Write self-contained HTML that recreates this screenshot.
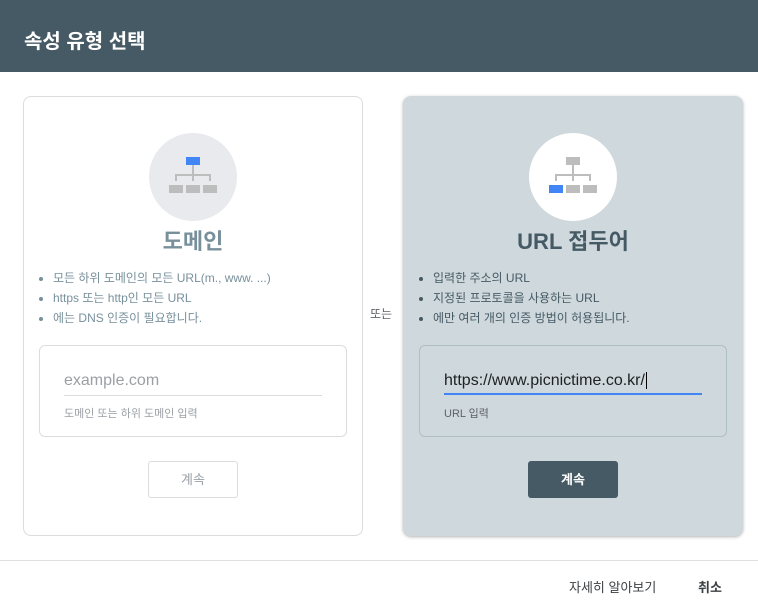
<!DOCTYPE html>
<html><head><meta charset="utf-8"><style>
*{margin:0;padding:0;box-sizing:border-box}
body{width:758px;height:611px;background:#fff;font-family:"Liberation Sans","Noto Sans CJK KR",sans-serif;position:relative;overflow:hidden}
.a{position:absolute}
.hdr{left:0;top:0;width:758px;height:72px;background:#455a64;color:#fff;font-size:20px;font-weight:bold;padding:25px 0 0 24px}
.card{top:96px;width:340px;height:440px;border-radius:8px}
.circ{width:88px;height:88px;border-radius:50%}
.t{font-size:22px;font-weight:bold;text-align:center;width:340px}
ul{list-style:none;font-size:12px}
li{position:relative;height:20px;line-height:20px}
li:before{content:"";position:absolute;left:-14px;top:9px;width:4px;height:4px;border-radius:50%;background:currentColor}
.box{width:308px;height:92px;border-radius:6px}
</style></head><body>
<div class="a hdr">속성 유형 선택</div>

<div class="a card" style="left:23px;border:1px solid #dadce0"></div>
<div class="a circ" style="left:149px;top:133px;background:#e8eaed"></div>
<svg class="a" style="left:169px;top:157px" width="48" height="40"><rect x="17" y="0" width="14" height="8" fill="#4285f4"/><path d="M24 8v10M7 24v-6h34v6M24 18v6" stroke="#bdbdbd" stroke-width="2" fill="none"/><rect x="0" y="28" width="14" height="8" fill="#bdbdbd"/><rect x="17" y="28" width="14" height="8" fill="#bdbdbd"/><rect x="34" y="28" width="14" height="8" fill="#bdbdbd"/></svg>
<div class="a t" style="left:23px;top:224px;color:#78909c">도메인</div>
<ul class="a" style="left:53px;top:268px;color:#78909c"><li>모든 하위 도메인의 모든 URL(m., www. ...)</li><li>https 또는 http인 모든 URL</li><li>에는 DNS 인증이 필요합니다.</li></ul>
<div class="a box" style="left:39px;top:345px;border:1px solid #dadce0"></div>
<div class="a" style="left:64px;top:372px;font-size:16px;color:#9aa0a6">example.com</div>
<div class="a" style="left:64px;top:395px;width:258px;height:1px;background:#dadce0"></div>
<div class="a" style="left:64px;top:405px;font-size:11px;color:#9aa0a6">도메인 또는 하위 도메인 입력</div>
<div class="a" style="left:148px;top:461px;width:90px;height:37px;border:1px solid #dadce0;border-radius:3px;font-size:13px;color:#9aa0a6;text-align:center;line-height:35px">계속</div>

<div class="a" style="left:370px;top:305px;font-size:12px;color:#5f6368">또는</div>

<div class="a card" style="left:403px;background:#cfd8dc;box-shadow:0 1px 3px rgba(0,0,0,.3)"></div>
<div class="a circ" style="left:529px;top:133px;background:#fff"></div>
<svg class="a" style="left:549px;top:157px" width="48" height="40"><rect x="17" y="0" width="14" height="8" fill="#bdbdbd"/><path d="M24 8v10M7 24v-6h34v6M24 18v6" stroke="#bdbdbd" stroke-width="2" fill="none"/><rect x="0" y="28" width="14" height="8" fill="#4285f4"/><rect x="17" y="28" width="14" height="8" fill="#bdbdbd"/><rect x="34" y="28" width="14" height="8" fill="#bdbdbd"/></svg>
<div class="a t" style="left:403px;top:224px;color:#455a64">URL 접두어</div>
<ul class="a" style="left:433px;top:268px;color:#455a64"><li>입력한 주소의 URL</li><li>지정된 프로토콜을 사용하는 URL</li><li>에만 여러 개의 인증 방법이 허용됩니다.</li></ul>
<div class="a box" style="left:419px;top:345px;border:1px solid #b0bec5"></div>
<div class="a" style="left:444px;top:372px;font-size:16px;color:#202124">https://www.picnictime.co.kr/<span style="border-left:1px solid #000;margin-left:1px"></span></div>
<div class="a" style="left:444px;top:393px;width:258px;height:2px;background:#4285f4"></div>
<div class="a" style="left:444px;top:405px;font-size:11px;color:#5f6368">URL 입력</div>
<div class="a" style="left:528px;top:461px;width:90px;height:37px;background:#455a64;border-radius:3px;font-size:13px;font-weight:bold;color:#fff;text-align:center;line-height:37px">계속</div>

<div class="a" style="left:0;top:560px;width:758px;height:1px;background:#e0e0e0"></div>
<div class="a" style="left:569px;top:577px;font-size:13px;color:#3c4043">자세히 알아보기</div>
<div class="a" style="left:698px;top:577px;font-size:13px;font-weight:bold;color:#3c4043">취소</div>
</body></html>
